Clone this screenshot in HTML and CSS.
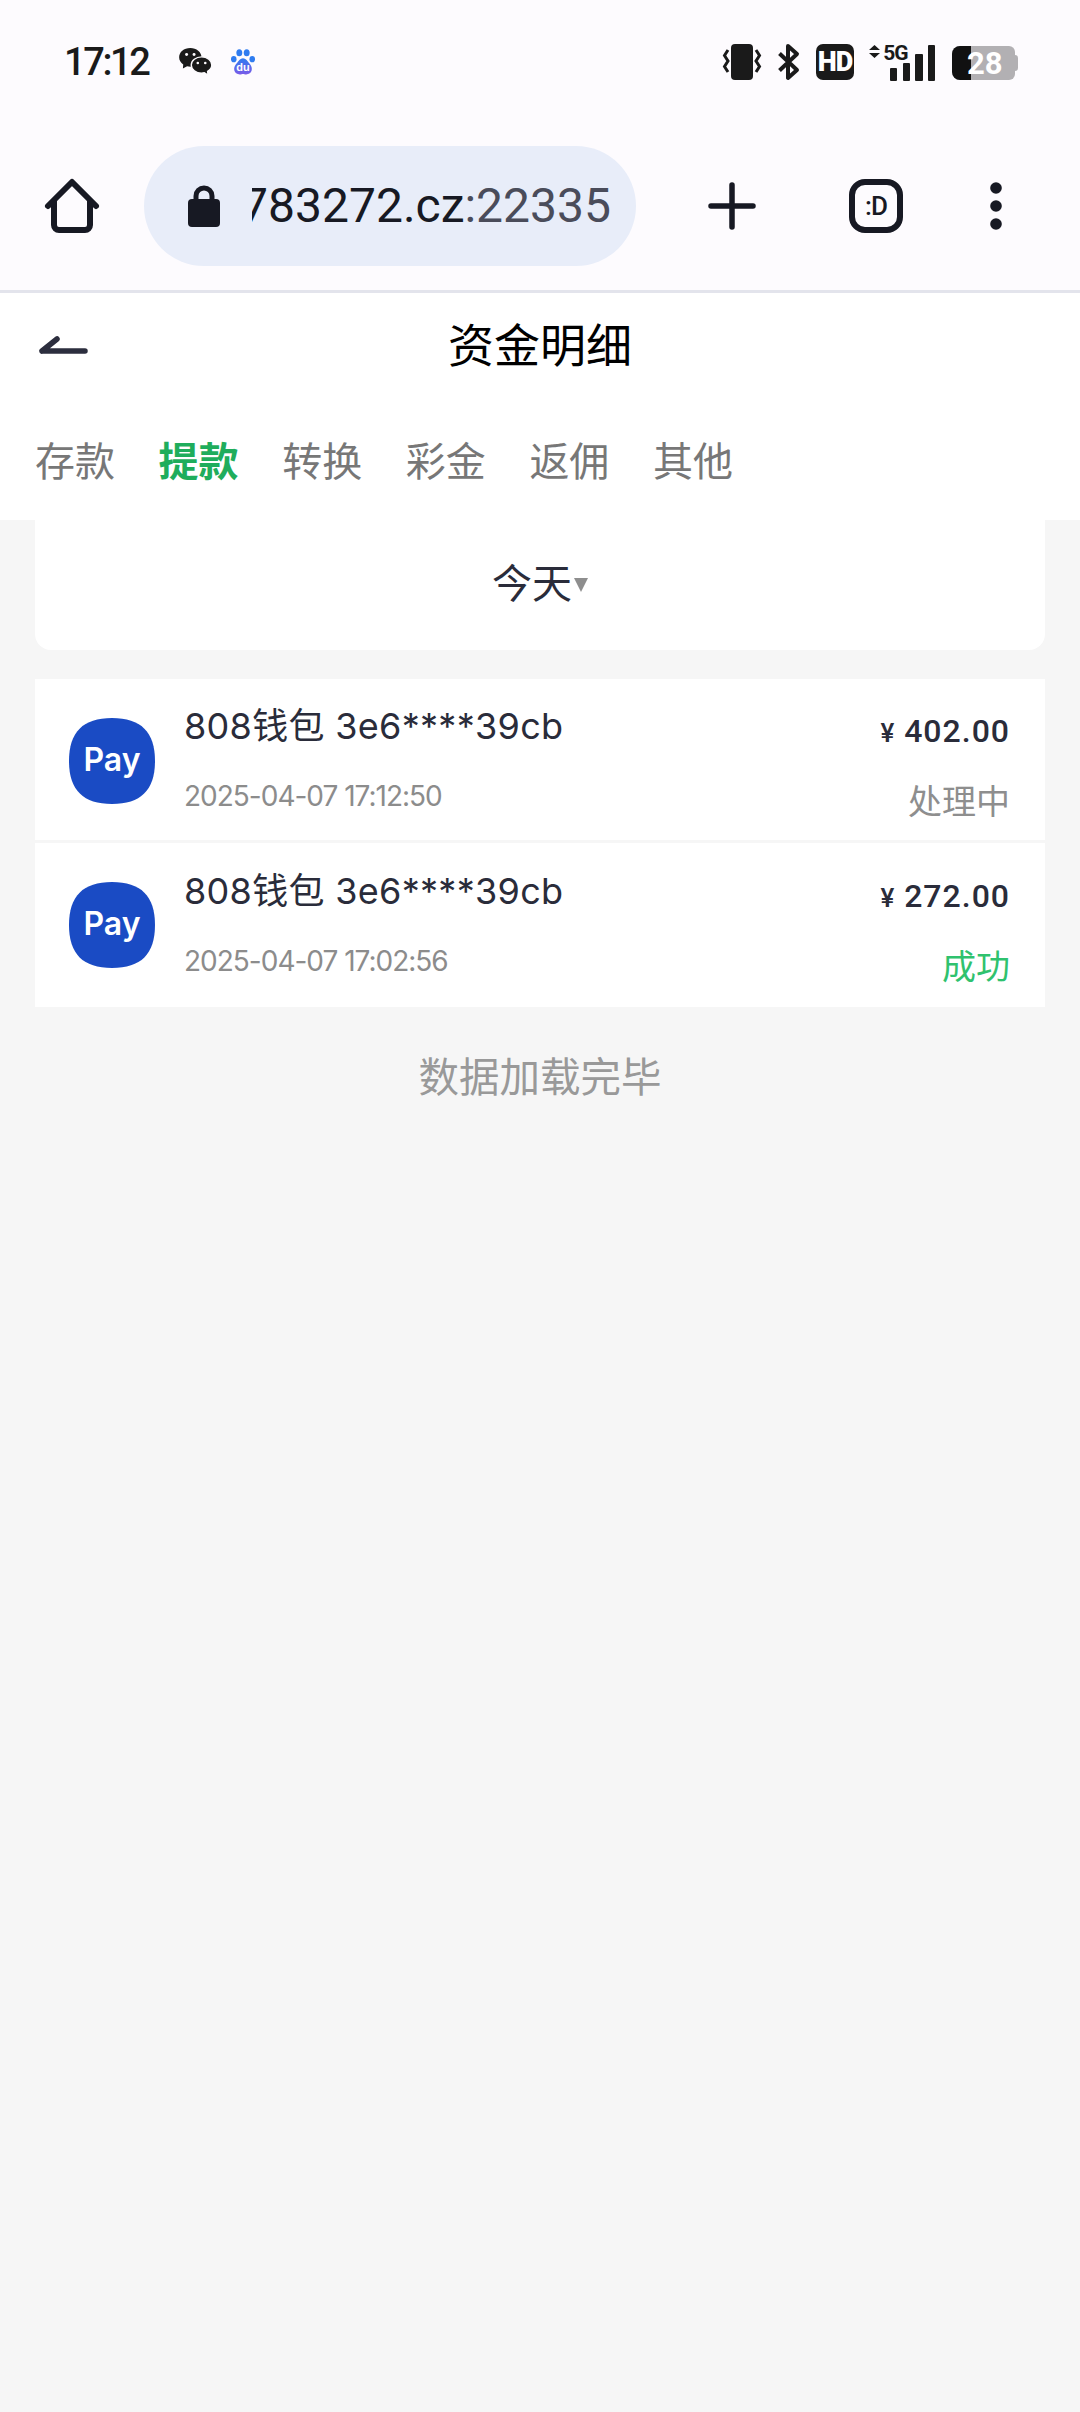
FILE: index.html
```html
<!DOCTYPE html>
<html lang="zh-CN">
<head>
  <meta charset="UTF-8">
  <meta name="viewport" content="width=device-width, initial-scale=1.0">
  <title>资金明细</title>
  <link rel="stylesheet" href="styles.css">
</head>
<body>
  <div class="statusbar">
    <div class="status-left">
      <span class="time">17:12</span>
      <svg class="icon-wechat" width="34" height="28" viewBox="0 0 36 30">
        <path fill="#1a1a1a" d="M13 0C6 0 1 4.500 1 10c0 3.200 1.700 5.900 4.400 7.700L5 22l4.500-2.400c1.100.3 2.300.4 3.500.4 6.500 0 12-4.500 12-10S19.500 0 13 0z"/>
        <path fill="#1a1a1a" stroke="#fdfbfe" stroke-width="1.500" d="M25 9.500c-6 0-11 3.900-11 8.700s5 8.700 11 8.700c1 0 2-.1 3-.4l4 2.500-.5-4c2.700-1.600 4.500-4 4.500-6.800 0-4.800-5-8.700-11-8.700z"/>
        <circle cx="9" cy="7" r="1.600" fill="#fdfbfe"/><circle cx="17" cy="7" r="1.600" fill="#fdfbfe"/>
        <circle cx="21" cy="16" r="1.400" fill="#fdfbfe"/><circle cx="29" cy="16" r="1.400" fill="#fdfbfe"/>
      </svg>
      <svg class="icon-baidu" width="24" height="26" viewBox="0 0 26 28">
        <defs>
          <linearGradient id="paw" x1="0" y1="0" x2="0" y2="1">
            <stop offset="0" stop-color="#2f7cf0"/>
            <stop offset="1" stop-color="#7a5be8"/>
          </linearGradient>
        </defs>
        <ellipse cx="9" cy="4" rx="3.200" ry="3.800" fill="#2f7cf0"/>
        <ellipse cx="17" cy="4" rx="3.200" ry="3.800" fill="#2f7cf0"/>
        <ellipse cx="3" cy="11" rx="3" ry="3.400" fill="#2f7cf0"/>
        <ellipse cx="23" cy="11" rx="3" ry="3.400" fill="#2f7cf0"/>
        <path fill="url(#paw)" d="M13 10c3 0 4.500 2.500 6.500 5 2 2.300 3.500 4.500 3 7.500-.5 3.500-3.500 5-6 5-1.500 0-2.500-.5-3.500-.5s-2 .5-3.500.5c-2.500 0-5.500-1.500-6-5-.5-3 1-5.200 3-7.500 2-2.500 3.500-5 6.500-5z"/>
        <text x="13" y="24" class="du-text">du</text>
      </svg>
    </div>
    <div class="status-right">
      <svg width="39" height="36" viewBox="0 0 39 36">
        <rect x="8" width="22" height="36" rx="4" fill="#1a1a1a"/>
        <path fill="none" stroke="#1a1a1a" stroke-width="3" d="M5 6 1.500 11.500 5 17 1.500 22.500 5 28M33 6l3.500 5.500L33 17l3.500 5.500L33 28"/>
      </svg>
      <svg class="gap-bt" width="22" height="36" viewBox="0 0 22 36">
        <path fill="none" stroke="#1a1a1a" stroke-width="4" stroke-linejoin="round" d="M1.500 9.500 19 26 10 34V2l9 8L1.500 26.500"/>
      </svg>
      <svg class="gap-hd" width="38" height="36" viewBox="0 0 38 36">
        <rect width="38" height="36" rx="7" fill="#1a1a1a"/>
        <text x="19" y="27" class="hd-text">HD</text>
      </svg>
      <svg class="gap-net" width="67" height="37" viewBox="0 0 67 37">
        <path fill="#1a1a1a" d="M5.500 1 11 6H0zM0 9h11l-5.500 5z"/>
        <text x="26.500" y="16" class="net-text">5G</text>
        <rect x="21" y="24" width="7" height="13" rx="1" fill="#1a1a1a"/>
        <rect x="34" y="19" width="7" height="18" rx="1" fill="#1a1a1a"/>
        <rect x="46" y="10" width="8" height="27" rx="1" fill="#1a1a1a"/>
        <rect x="59" y="1" width="7" height="36" rx="1" fill="#1a1a1a"/>
      </svg>
      <div class="battery">
        <div class="battery-fill"></div>
        <span class="battery-num">28</span>
      </div>
    </div>
  </div>

  <div class="toolbar">
    <svg width="54" height="54" viewBox="0 0 54 54">
      <path fill="none" stroke="#171923" stroke-width="6" stroke-linecap="round" stroke-linejoin="round" d="M3 27 27 3l24 24M9 22v24a5 5 0 0 0 5 5h26a5 5 0 0 0 5-5V22"/>
    </svg>
    <div class="urlbar">
      <svg width="32" height="42" viewBox="0 0 32 42">
        <path fill="none" stroke="#171923" stroke-width="5" d="M8 18v-7a8 8 0 0 1 16 0v7"/>
        <rect y="14" width="32" height="28" rx="4" fill="#171923"/>
      </svg>
      <div class="url"><span class="url-text">783272.cz<span class="url-port">:22335</span></span></div>
    </div>
    <svg class="tool-plus" width="48" height="48" viewBox="0 0 48 48">
      <path stroke="#171923" stroke-width="5.500" stroke-linecap="round" d="M24 3v42M3 24h42"/>
    </svg>
    <div class="tab-count">:D</div>
    <svg class="tool-more" width="12" height="48" viewBox="0 0 12 48">
      <circle cx="6" cy="6" r="5.800" fill="#171923"/>
      <circle cx="6" cy="24" r="5.800" fill="#171923"/>
      <circle cx="6" cy="42" r="5.800" fill="#171923"/>
    </svg>
  </div>

  <div class="page-head">
    <div class="title-row">
      <svg class="back" width="50" height="20" viewBox="0 0 50 20">
        <path fill="none" stroke="#2c2e3e" stroke-width="5.500" stroke-linecap="round" d="M4 15h43M4 15 19 3"/>
      </svg>
      <h1>资金明细</h1>
    </div>
    <div class="tabs">
      <span class="tab">存款</span>
      <span class="tab active">提款</span>
      <span class="tab">转换</span>
      <span class="tab">彩金</span>
      <span class="tab">返佣</span>
      <span class="tab">其他</span>
    </div>
  </div>

  <div class="content">
    <div class="date-card">
      <span class="date-label">今天</span><span class="date-arrow"></span>
    </div>

    <div class="list">
      <div class="row">
        <svg class="pay" width="86" height="86" viewBox="0 0 86 86">
          <path fill="#1a4bc4" d="M43 0C72 0 86 14 86 43S72 86 43 86 0 72 0 43 14 0 43 0z"/>
          <text x="43" y="53" class="pay-text">Pay</text>
        </svg>
        <div class="row-main">
          <div class="row-name">808钱包 3e6****39cb</div>
          <div class="row-time">2025-04-07 17:12:50</div>
        </div>
        <div class="row-side">
          <div class="row-amount"><span class="yen">¥</span> 402.00</div>
          <div class="row-status">处理中</div>
        </div>
      </div>
      <div class="row">
        <svg class="pay" width="86" height="86" viewBox="0 0 86 86">
          <path fill="#1a4bc4" d="M43 0C72 0 86 14 86 43S72 86 43 86 0 72 0 43 14 0 43 0z"/>
          <text x="43" y="53" class="pay-text">Pay</text>
        </svg>
        <div class="row-main">
          <div class="row-name">808钱包 3e6****39cb</div>
          <div class="row-time">2025-04-07 17:02:56</div>
        </div>
        <div class="row-side">
          <div class="row-amount"><span class="yen">¥</span> 272.00</div>
          <div class="row-status success">成功</div>
        </div>
      </div>
    </div>

    <div class="list-end">数据加载完毕</div>
  </div>
</body>
</html>
```

FILE: styles.css
```css
* {
  box-sizing: border-box;
}
html, body {
  margin: 0;
  padding: 0;
}
body {
  width: 1080px;
  height: 2412px;
  overflow: hidden;
  background-color: #f6f6f6;
  font-family: "Inter", "Noto Sans CJK SC", sans-serif;
  color: #2a2c3a;
}
svg {
  display: block;
  flex: none;
  overflow: visible;
}

/* status bar */
.statusbar {
  height: 128px;
  padding: 0 62px 4px 64px;
  background-color: #fdfbfe;
  display: flex;
  justify-content: space-between;
  align-items: center;
}
.status-left {
  display: flex;
  align-items: center;
}
.time {
  font-family: Roboto, sans-serif;
  font-weight: 500;
  font-size: 38px;
  letter-spacing: -2.4px;
  color: #1a1a1a;
}
.icon-wechat {
  margin-left: 30px;
}
.icon-baidu {
  margin-left: 19px;
}
.du-text {
  font-family: "Liberation Sans", sans-serif;
  font-size: 12px;
  font-weight: 700;
  fill: #fff;
  text-anchor: middle;
}
.status-right {
  display: flex;
  align-items: center;
}
.gap-bt {
  margin-left: 16px;
}
.gap-hd {
  margin-left: 16px;
}
.gap-net {
  margin-left: 15px;
}
.hd-text {
  font-family: Roboto, sans-serif;
  font-size: 27px;
  font-weight: 900;
  letter-spacing: -1px;
  fill: #fff;
  text-anchor: middle;
}
.net-text {
  font-family: Roboto, sans-serif;
  font-size: 21px;
  font-weight: 700;
  letter-spacing: -1px;
  fill: #1a1a1a;
  text-anchor: middle;
}
.battery {
  position: relative;
  margin: 2px 3px 0 16px;
  width: 63px;
  height: 34px;
  border-radius: 8px 6px 6px 8px;
  background-color: #b2b0b3;
}
.battery::after {
  content: "";
  position: absolute;
  right: -3px;
  top: 9px;
  width: 3px;
  height: 16px;
  border-radius: 0 3px 3px 0;
  background-color: #b2b0b3;
}
.battery-fill {
  width: 19px;
  height: 100%;
  border-radius: 8px 0 0 8px;
  background-color: #111;
}
.battery-num {
  position: absolute;
  left: 15px;
  top: 0;
  font-family: Roboto, sans-serif;
  font-size: 31px;
  line-height: 36px;
  font-weight: 700;
  color: #fff;
}

/* browser toolbar */
.toolbar {
  height: 165px;
  padding: 18px 0 24px 45px;
  background-color: #fdfbfe;
  border-bottom: 3px solid #e3e4ec;
  display: flex;
  align-items: center;
}
.urlbar {
  margin-left: 45px;
  width: 492px;
  height: 120px;
  padding: 0 25px 0 44px;
  border-radius: 60px;
  background-color: #e8edf9;
  display: flex;
  align-items: center;
  flex: none;
}
.url {
  flex: 1;
  min-width: 0;
  margin-left: 32px;
  overflow: hidden;
  display: flex;
  justify-content: flex-end;
}
.url-text {
  font-family: Roboto, sans-serif;
  font-size: 48px;
  line-height: 60px;
  color: #171923;
  white-space: nowrap;
}
.url-port {
  color: #4a4c5a;
}
.tool-plus {
  margin-left: 72px;
}
.tab-count {
  margin-left: 93px;
  width: 54px;
  height: 54px;
  border: 6px solid #171923;
  border-radius: 16px;
  font-family: Roboto, sans-serif;
  font-weight: 500;
  font-size: 26px;
  letter-spacing: -1px;
  line-height: 42px;
  text-align: center;
  color: #171923;
}
.tool-more {
  margin-left: 87px;
}

/* page header */
.page-head {
  height: 227px;
  background-color: #fff;
}
.title-row {
  position: relative;
  height: 104px;
  padding-bottom: 6px;
  display: flex;
  justify-content: center;
  align-items: center;
}
.back {
  position: absolute;
  left: 38px;
  top: 43px;
}
h1 {
  margin: 0;
  font-family: "Noto Sans CJK SC", sans-serif;
  font-size: 46px;
  line-height: 60px;
  font-weight: 400;
  color: #000;
}
.tabs {
  padding: 0 35px;
  display: flex;
  gap: 43.6px;
  margin-top: 33px;
}
.tab {
  font-family: "Noto Sans CJK SC", sans-serif;
  font-size: 40px;
  line-height: 58px;
  color: #777;
}
.tab.active {
  font-weight: 700;
  color: #1fad5c;
}

/* content */
.content {
  padding: 0 35px;
}
.date-card {
  height: 130px;
  padding-bottom: 9px;
  background-color: #fff;
  border-radius: 0 0 16px 16px;
  display: flex;
  justify-content: center;
  align-items: center;
}
.date-label {
  font-family: "Noto Sans CJK SC", sans-serif;
  font-size: 40px;
  color: #2a2c3a;
}
.date-arrow {
  margin: 9px 0 0 2px;
  width: 0;
  height: 0;
  border-left: 7px solid transparent;
  border-right: 7px solid transparent;
  border-top: 14px solid #8e8e8e;
}
.list {
  margin-top: 29px;
  display: flex;
  flex-direction: column;
  gap: 3px;
}
.row {
  height: 164px;
  padding: 0 35px 0 34px;
  background-color: #fff;
  display: flex;
  align-items: center;
}
.row:first-child {
  height: 161px;
  padding-top: 2px;
}
.row-main {
  flex: 1;
  margin: -6px 0 0 29px;
}
.row-name {
  font-size: 36px;
  letter-spacing: .3px;
  line-height: 48px;
  color: #2a2c3a;
}
.row-time {
  margin-top: 29px;
  font-size: 28px;
  letter-spacing: -1px;
  line-height: 34px;
  color: #8c8c8c;
}
.row-side {
  margin-top: 12px;
  text-align: right;
}
.row-amount {
  font-family: Roboto, sans-serif;
  font-size: 32px;
  line-height: 40px;
  font-weight: 500;
  letter-spacing: 1px;
  color: #2a2c3a;
}
.yen {
  font-size: 26px;
}
.row-status {
  margin-top: 25px;
  font-family: "Noto Sans CJK SC", sans-serif;
  font-size: 34px;
  line-height: 44px;
  color: #8e8e8e;
}
.row-status.success {
  color: #2fc26e;
}
.pay-text {
  font-family: Inter, sans-serif;
  font-size: 32px;
  font-weight: 600;
  fill: #fff;
  text-anchor: middle;
}
.list-end {
  margin-top: 39px;
  text-align: center;
  font-family: "Noto Sans CJK SC", sans-serif;
  font-size: 40.500px;
  line-height: 58px;
  color: #999;
}
```
